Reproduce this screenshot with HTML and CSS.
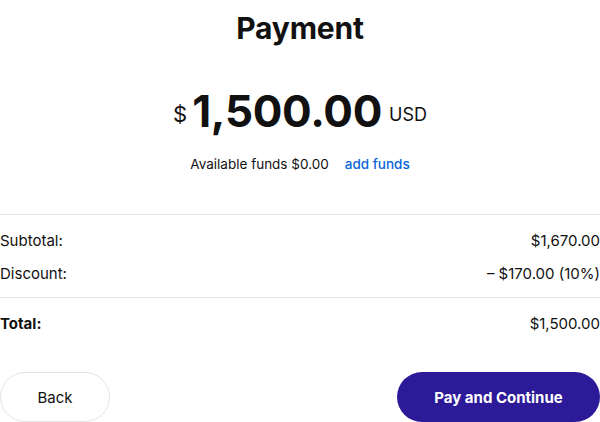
FILE: index.html
```html
<!DOCTYPE html>
<html>
<head>
<meta charset="utf-8">
<link rel="stylesheet" href="styles.css">
</head>
<body>
<div class="page">
  <h1 class="title">Payment</h1>
  <div class="amount">
    <span class="cur">$</span><span class="big">1,500.00</span><span class="code">USD</span>
  </div>
  <div class="funds">
    <span>Available funds $0.00</span><a class="add" href="#">add funds</a>
  </div>
  <div class="summary">
    <div class="row"><span>Subtotal:</span><span>$1,670.00</span></div>
    <div class="row"><span>Discount:</span><span>– $170.00 (10%)</span></div>
  </div>
  <div class="total">
    <div class="row bold"><span>Total:</span><span class="tv">$1,500.00</span></div>
  </div>
  <div class="actions">
    <button class="btn back">Back</button>
    <button class="btn pay">Pay and Continue</button>
  </div>
</div>
</body>
</html>
```
FILE: styles.css
```css
html, body { margin: 0; padding: 0; background: #fff; }
body { font-family: "Inter", "Lato", sans-serif; color: #111; }
.page { width: 600px; height: 422px; overflow: hidden; }
.title { margin: 0; padding-top: 8px; text-align: center; font-weight: 700; font-size: 30px; line-height: 40px; letter-spacing: -0.2px; }
.amount { margin-top: 38px; text-align: center; line-height: 50px; height: 50px; white-space: nowrap; }
.cur { font-size: 22px; margin-right: 5px; vertical-align: 5px; }
.big { font-weight: 700; font-size: 44px; letter-spacing: -0.3px; }
.code { font-size: 18px; margin-left: 7px; vertical-align: 6px; }
.funds { display: flex; justify-content: center; gap: 16px; margin-top: 18px; font-size: 13.5px; line-height: 20px; }
.add { color: #0a66d8; text-decoration: none; font-weight: 500; }
.summary { margin-top: 40px; border-top: 1px solid #e4e4e4; padding: 16px 0 13px; display: flex; flex-direction: column; gap: 13px; }
.row { display: flex; justify-content: space-between; font-size: 15px; line-height: 20px; }
.total { border-top: 1px solid #e4e4e4; padding-top: 16px; }
.bold span:first-child { font-weight: 700; }
.actions { display: flex; justify-content: space-between; margin-top: 38px; }
.btn { height: 50px; border-radius: 25px; font-family: "Inter", sans-serif; font-size: 15px; cursor: pointer; }
.back { width: 110px; background: #fff; border: 1px solid #e4e4e4; color: #111; }
.pay { width: 203px; background: #2c1a98; border: none; color: #fff; font-weight: 700; }
```
